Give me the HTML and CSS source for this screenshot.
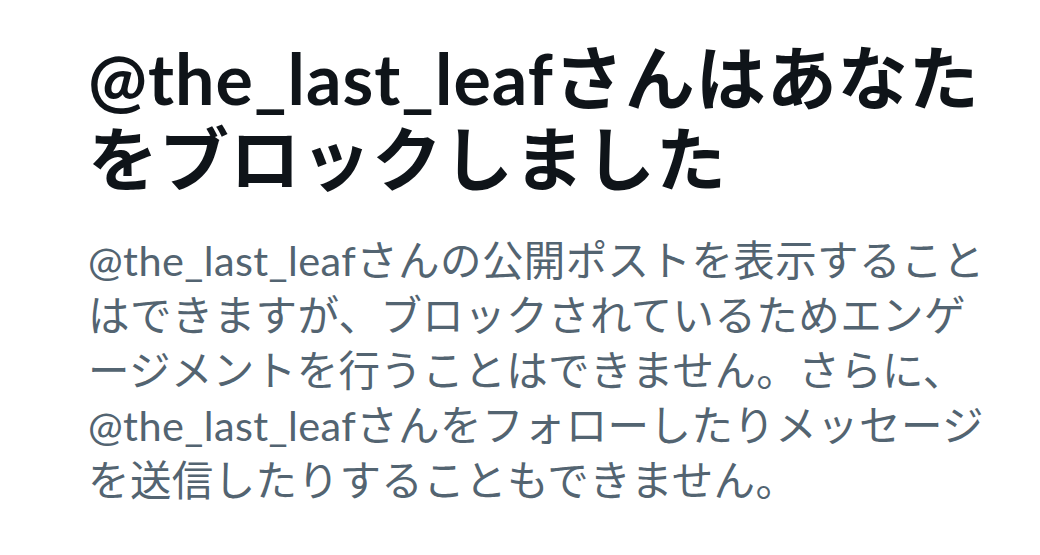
FILE: index.html
```html
<!DOCTYPE html>
<html lang="ja">
<head>
  <meta charset="UTF-8">
  <meta name="viewport" content="width=device-width, initial-scale=1.0">
  <title>ブロックされています</title>
  <link rel="stylesheet" href="styles.css">
</head>
<body>
  <div class="blocked">
    <h1 class="blocked-title">@the_last_leafさんはあなたをブロックしました</h1>
    <p class="blocked-text">
      @the_last_leafさんの公開ポストを表示することはできますが、ブロックされているためエンゲージメントを行うことはできません。さらに、@the_last_leafさんをフォローしたりメッセージを送信したりすることもできません。
    </p>
  </div>
</body>
</html>
```

FILE: styles.css
```css
body {
  margin: 0;
  background-color: #ffffff;
  font-family: Lato, "Noto Sans CJK JP", sans-serif;
}
.blocked {
  width: 910px;
  padding: 38px 0 0 88px;
}
.blocked-title {
  margin: 0;
  font-size: 70px;
  line-height: 81px;
  font-weight: 700;
  letter-spacing: 1px;
  color: #0f1419;
}
.blocked-text {
  margin: 33px 0 0;
  font-size: 41.5px;
  line-height: 55px;
  letter-spacing: 0.4px;
  line-break: loose;
  color: #536471;
}
```
